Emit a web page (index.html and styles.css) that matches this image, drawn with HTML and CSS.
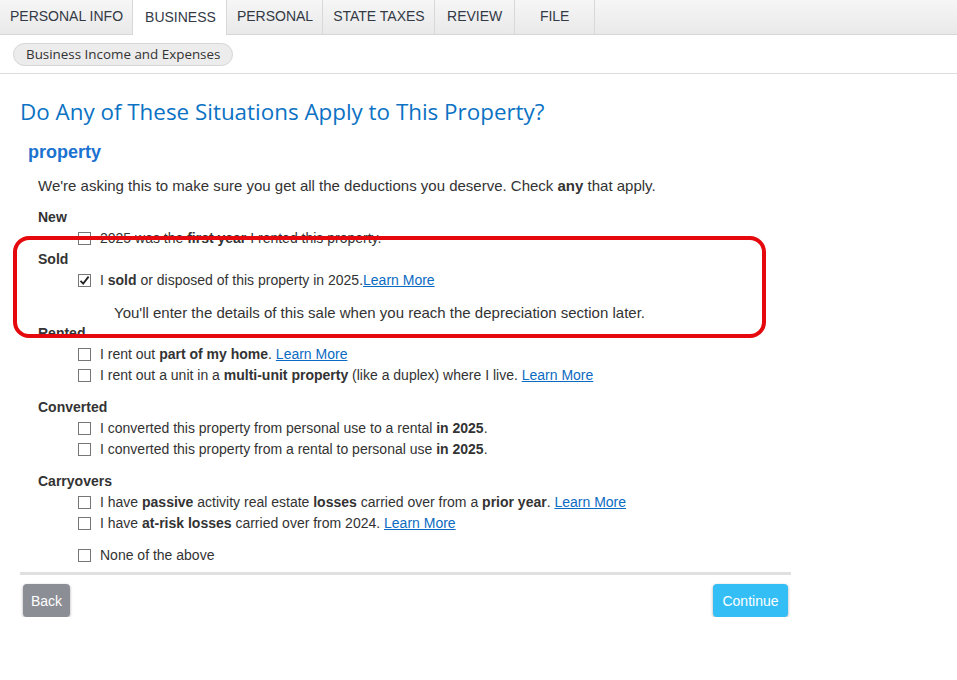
FILE: index.html
```html
<!DOCTYPE html>
<html lang="en">
<head>
    <meta charset="UTF-8">
    <title>Rental Property Situations</title>
    <link rel="stylesheet" href="styles.css">
</head>
<body>
    <nav class="tabs">
        <a class="tab">PERSONAL INFO</a>
        <a class="tab active">BUSINESS</a>
        <a class="tab">PERSONAL</a>
        <a class="tab">STATE TAXES</a>
        <a class="tab">REVIEW</a>
        <a class="tab">FILE</a>
    </nav>
    <div class="subnav">
        <span class="pill">Business Income and Expenses</span>
    </div>

    <div class="content">
        <h1>Do Any of These Situations Apply to This Property?</h1>
        <h2>property</h2>
        <p class="intro">We're asking this to make sure you get all the deductions you deserve. Check <b>any</b> that apply.</p>

        <div class="group tight">
            <div class="group-label">New</div>
            <label class="option"><span class="box"></span><span>2025 was the <b>first year</b> I rented this property.</span></label>
        </div>

        <div class="group tight">
            <div class="group-label">Sold</div>
            <label class="option"><span class="box checked"><svg viewBox="0 0 13 13" width="13" height="13"><path d="M2.5 6.8 L5.2 9.6 L10.6 2.6" fill="none" stroke="#222" stroke-width="1.8"/></svg></span><span>I <b>sold</b> or disposed of this property in 2025.<a href="#">Learn More</a></span></label>
            <p class="note">You'll enter the details of this sale when you reach the depreciation section later.</p>
        </div>

        <div class="group">
            <div class="group-label">Rented</div>
            <label class="option"><span class="box"></span><span>I rent out <b>part of my home</b>. <a href="#">Learn More</a></span></label>
            <label class="option"><span class="box"></span><span>I rent out a unit in a <b>multi-unit property</b> (like a duplex) where I live. <a href="#">Learn More</a></span></label>
        </div>

        <div class="group">
            <div class="group-label">Converted</div>
            <label class="option"><span class="box"></span><span>I converted this property from personal use to a rental <b>in 2025</b>.</span></label>
            <label class="option"><span class="box"></span><span>I converted this property from a rental to personal use <b>in 2025</b>.</span></label>
        </div>

        <div class="group">
            <div class="group-label">Carryovers</div>
            <label class="option"><span class="box"></span><span>I have <b>passive</b> activity real estate <b>losses</b> carried over from a <b>prior year</b>. <a href="#">Learn More</a></span></label>
            <label class="option"><span class="box"></span><span>I have <b>at-risk losses</b> carried over from 2024. <a href="#">Learn More</a></span></label>
        </div>

        <div class="group last">
            <label class="option"><span class="box"></span><span>None of the above</span></label>
        </div>

        <hr class="divider">
        <div class="actions">
            <button class="btn btn-back">Back</button>
            <button class="btn btn-continue">Continue</button>
        </div>
    </div>

    <!-- highlight drawn round the Sold section -->
    <div class="highlight"></div>
</body>
</html>
```

FILE: styles.css
```css
body {
    margin: 0;
    font-family: "Liberation Sans", Arial, sans-serif;
    font-size: 14px;
    color: #333;
    background: #fff;
    position: relative;
}
.tabs {
    display: flex;
    height: 35px;
    background: linear-gradient(#f6f6f6, #e9e9e9);
    border-bottom: 1px solid #d6d6d6;
    box-sizing: border-box;
}
.tab {
    box-sizing: border-box;
    min-width: 80px;
    padding: 0 9px 0 10px;
    line-height: 33px;
    text-align: center;
    border-right: 1px solid #d8d8d8;
    color: #333a45;
    font-size: 14px;
    text-decoration: none;
}
.tab.active {
    background: #fff;
    height: 35px;
    line-height: 35px;
    margin-bottom: -1px;
    padding: 0 10px 0 12px;
}
.subnav {
    height: 39px;
    box-sizing: border-box;
    border-bottom: 1px solid #dcdcdc;
    padding: 8px 0 0 13px;
}
.pill {
    display: inline-block;
    height: 23px;
    line-height: 21px;
    box-sizing: border-box;
    padding: 0 12px;
    border: 1px solid #d6d6d6;
    border-radius: 12px;
    background: #ececec;
    font-family: "Open Sans", sans-serif;
    font-size: 13.4px;
    color: #333;
}
.content {
    width: 771px;
    margin-left: 20px;
}
h1 {
    margin: 23px 0 0;
    font-family: "Open Sans", sans-serif;
    font-weight: 500;
    font-size: 22.4px;
    line-height: 30px;
    color: #0b72c4;
}
h2 {
    margin: 13px 0 0 8px;
    font-size: 18px;
    line-height: 24px;
    color: #1b72d0;
}
.intro {
    margin: 11px 0 0 18px;
    font-size: 15px;
    line-height: 21px;
}
.group {
    margin: 10px 0 0 18px;
}
.group:first-of-type {
    margin-top: 11px;
}
.group + .group {
    margin-top: 11px;
}
.group.tight + .group {
    margin-top: 0;
}
.group-label {
    font-weight: bold;
    line-height: 21px;
}
.option {
    display: flex;
    align-items: center;
    margin-left: 40px;
    line-height: 21px;
}
.box {
    width: 13px;
    height: 13px;
    box-sizing: border-box;
    border: 1px solid #767676;
    background: #fff;
    margin-right: 9px;
    flex: none;
    position: relative;
}
.box svg {
    position: absolute;
    left: -1px;
    top: -1px;
}
a {
    color: #0b6bc2;
    text-decoration: underline;
}
.note {
    margin: 11px 0 0 76px;
    font-size: 15px;
    line-height: 21px;
}
.group.last {
    margin-top: 11px;
}
.divider {
    margin: 6px 0 0;
    border: none;
    height: 3px;
    background: #e0e0e0;
}
.actions {
    display: flex;
    justify-content: space-between;
    padding: 9px 3px 0;
}
.btn {
    height: 33px;
    border: none;
    border-radius: 4px;
    color: #fff;
    font-family: "Liberation Sans", Arial, sans-serif;
    font-size: 14px;
    box-shadow: 0 1px 3px rgba(0, 0, 0, 0.35);
}
.btn-back {
    width: 47px;
    background: #8b8e95;
}
.btn-continue {
    width: 75px;
    background: #34bef6;
}
.highlight {
    position: absolute;
    left: 13px;
    top: 236px;
    width: 753px;
    height: 102px;
    box-sizing: border-box;
    border: 4px solid #e5080c;
    border-radius: 16px;
}
```
